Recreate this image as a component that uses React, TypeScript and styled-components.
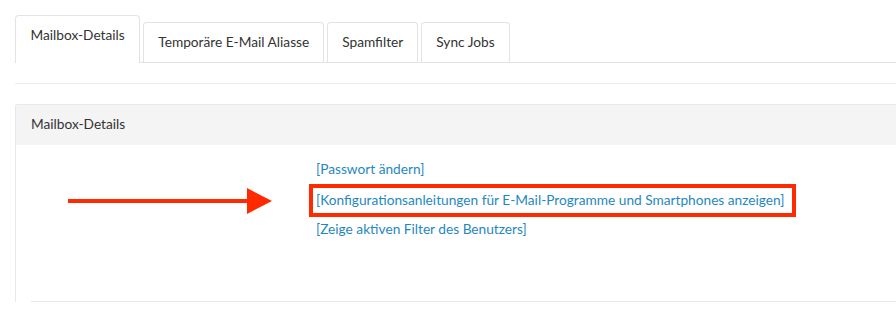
import React from "react";
import styled, { createGlobalStyle } from "styled-components";

const GlobalStyle = createGlobalStyle`
  html, body {
    margin: 0;
    padding: 0;
    background: #ffffff;
    overflow: hidden;
  }

  body {
    font-family: Lato, "Open Sans", "Liberation Sans", sans-serif;
    font-size: 13.7px;
    color: #333333;
  }
`;

const TABS = [
  "Mailbox-Details",
  "Temporäre E-Mail Aliasse",
  "Spamfilter",
  "Sync Jobs",
];

const LINKS = {
  password: "[Passwort ändern]",
  config:
    "[Konfigurationsanleitungen für E-Mail-Programme und Smartphones anzeigen]",
  filter: "[Zeige aktiven Filter des Benutzers]",
};

const Arrow = () => (
  <ArrowSvg width="205" height="26" viewBox="0 0 205 26">
    <rect x="0" y="11" width="182" height="4" fill="#ff2a00" />
    <polygon points="179,0 204,13 179,26" fill="#ff2a00" />
  </ArrowSvg>
);

const App = () => {
  return (
    <>
      <GlobalStyle />
      <Page>
        <TabBar>
          {TABS.map((tab, i) => (
            <Tab key={tab} $active={i === 0}>
              {tab}
            </Tab>
          ))}
        </TabBar>
        <Divider />
        <Panel>
          <PanelHeader>Mailbox-Details</PanelHeader>
          <PanelBody>
            <LinkRow>
              <Arrow />
              <LinkList>
                <LinkItem href="#">{LINKS.password}</LinkItem>
                <Highlight>
                  <LinkItem href="#" $bare>
                    {LINKS.config}
                  </LinkItem>
                </Highlight>
                <LinkItem href="#">{LINKS.filter}</LinkItem>
              </LinkList>
            </LinkRow>
            <BodyRule />
          </PanelBody>
        </Panel>
      </Page>
    </>
  );
};

export default App;

const Page = styled.div`
  width: calc(100vw + 40px);
  padding: 15px 0 0 15px;
  box-sizing: border-box;
`;

const TabBar = styled.div`
  display: flex;
  align-items: flex-end;
  gap: 3px;
  height: 47px;
  border-bottom: 1px solid #e3e3e3;
  box-sizing: content-box;
`;

const Tab = styled.div<{ $active?: boolean }>`
  padding: ${(p) => (p.$active ? "9px 14.5px 18px" : "9px 14px 10px")};
  line-height: 20px;
  color: #333333;
  background: #ffffff;

  border: 1px solid #e3e3e3;
  border-bottom: none;
  border-radius: 4px 4px 0 0;
  margin-bottom: ${(p) => (p.$active ? "-1px" : "0")};

  white-space: nowrap;
  cursor: pointer;
`;

const Divider = styled.div`
  height: 1px;
  margin-top: 20px;
  background: #ececec;
`;

const Panel = styled.div`
  margin-top: 20px;
  border: 1px solid #e8e8e8;
  border-right: none;
  border-bottom: none;
  border-radius: 3px 0 0 0;
`;

const PanelHeader = styled.div`
  height: 40px;
  padding: 0 0 2px 15px;
  box-sizing: border-box;
  display: flex;
  align-items: center;

  background: #f4f4f4;
  color: #333333;
  line-height: 20px;
`;

const PanelBody = styled.div`
  padding: 14px 0 0 15px;
`;

const LinkRow = styled.div`
  display: flex;
  align-items: flex-start;
  gap: 36px;
  padding-left: 37px;
`;

const ArrowSvg = styled.svg`
  display: block;
  flex-shrink: 0;
  margin-top: 29px;
`;

const LinkList = styled.div`
  display: flex;
  flex-direction: column;
  align-items: flex-start;
`;

const LinkItem = styled.a<{ $bare?: boolean }>`
  display: block;
  padding-left: ${(p) => (p.$bare ? "0" : "7px")};
  line-height: 20px;
  color: #1f88c2;
  text-decoration: none;
  white-space: nowrap;
`;

const Highlight = styled.div`
  margin: 5px 0 2px;
  padding: 2px 8px 3px 3px;
  border: 4px solid #ff2a00;
`;

const BodyRule = styled.div`
  height: 1px;
  margin-top: 62px;
  background: #e8e8e8;
`;
